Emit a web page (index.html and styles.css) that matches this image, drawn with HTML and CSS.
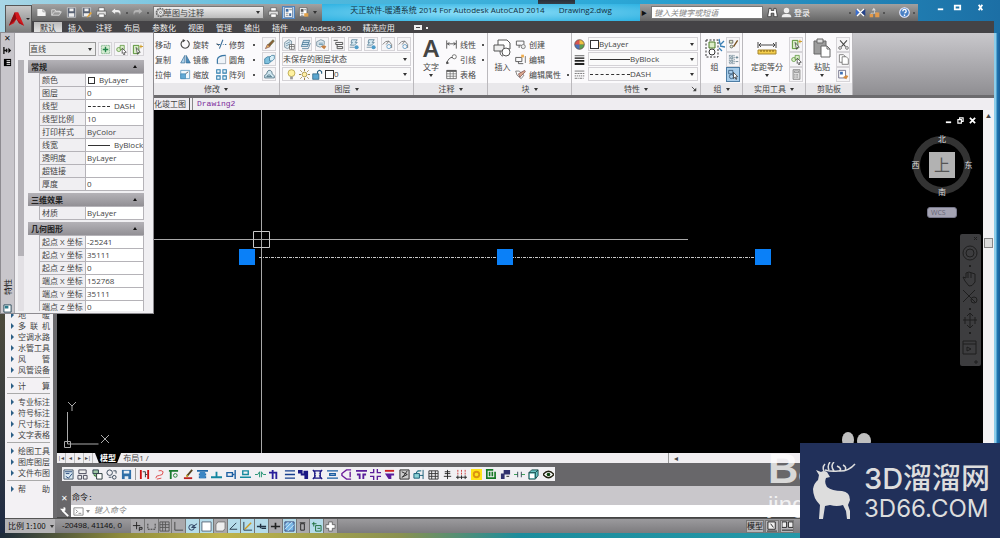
FILE: index.html
```html
<!DOCTYPE html>
<html lang="zh-CN">

<head>
    <meta charset="UTF-8">
    <meta name="viewport" content="width=device-width, initial-scale=1.0">
    <title>天正软件-暖通系统 2014</title>
    <link rel="stylesheet" href="styles.css">
</head>

<body>
    <!-- shared icons -->
    <svg class="sprite" aria-hidden="true">
        <symbol id="i-new" viewBox="0 0 16 16"><path d="M2 3h8l4 4v6H2z" fill="#f4f4f4"/><path d="M10 3v4h4" fill="none" stroke="#888"/></symbol>
        <symbol id="i-open" viewBox="0 0 16 16"><path d="M1 12V4h5l1 2h6v2M1 12l4-5h10l-3 5z" fill="#999" stroke="#eee"/></symbol>
        <symbol id="i-save" viewBox="0 0 16 16"><path d="M2 1h12v14H2z" fill="#596273" stroke="#ddd"/><path d="M5 2h6v4H5zM4 9h8v5H4z" fill="#eee"/></symbol>
        <symbol id="i-saveas" viewBox="0 0 16 16"><path d="M2 1h12v13H2z" fill="#596273" stroke="#ddd"/><path d="M5 2h6v4H5zM4 9h8v4H4z" fill="#eee"/><path d="M8 15l6-8 2 2-6 6z" fill="#e0a33c"/></symbol>
        <symbol id="i-print" viewBox="0 0 16 16"><path d="M4 1h8v5H4z" fill="#fff" stroke="#555"/><path d="M1 6h14v6H1z" fill="#e2e2e2" stroke="#555"/><path d="M4 10h8v5H4z" fill="#fff" stroke="#555"/></symbol>
        <symbol id="i-undo" viewBox="0 0 16 16"><path d="M6 2L1 6l5 4V7.500h4q3 0 3 5 3-8-4-8H6z" fill="#eee"/></symbol>
        <symbol id="i-redo" viewBox="0 0 16 16"><path d="M10 2l5 4-5 4V7.500H6q-3 0-3 5-3-8 4-8h3z" fill="#b5b5b5"/></symbol>
        <symbol id="i-gear" viewBox="0 0 16 16"><circle cx="8" cy="8" r="6" fill="none" stroke="#666" stroke-width="2" stroke-dasharray="2.600 1.100"/><circle cx="8" cy="8" r="4.500" fill="#eee" stroke="#777"/><circle cx="8" cy="8" r="1.500" fill="none" stroke="#666"/></symbol>
        <symbol id="i-sheet" viewBox="0 0 16 16"><path d="M2 1h12v14H2z" fill="#fff" stroke="#3d5a80"/><path d="M4 3h4v4H4zM9 9h3v4H9z" fill="#3d6ea8"/><path d="M9 4h4M4 9h4M4 12h4" stroke="#555"/></symbol>
        <symbol id="i-sheetset" viewBox="0 0 16 16"><path d="M2 1h11v13H2z" fill="#fff" stroke="#555"/><path d="M4 3h4v4H4z" fill="#555"/><path d="M9 4h3M4 9h4M4 12h4" stroke="#555"/><path d="M9 9h6v5H9z" fill="#e2a24a"/></symbol>
        <symbol id="i-find" viewBox="0 0 16 16"><path d="M3 2h3v3h4V2h3l2 12h-5V9H6v5H1z" fill="#fff" stroke="#222"/></symbol>
        <symbol id="i-user" viewBox="0 0 16 16"><circle cx="8" cy="5" r="4" fill="#eee"/><path d="M1 15q0-5 5-5h4q5 0 5 5z" fill="#eee"/></symbol>
        <symbol id="i-x360" viewBox="0 0 16 16"><path d="M1 3l6 5-6 5z" fill="#3b6fd0"/><path d="M3 3l10 10M13 3L3 13" stroke="#fff" stroke-width="2"/><path d="M15 3L9 8l6 5z" fill="#26448c"/></symbol>
        <symbol id="i-net" viewBox="0 0 16 16"><path d="M7 1l3 4H4z" fill="#ddd"/><path d="M3 14V9h10M8 5v4" stroke="#ddd" fill="none"/><path d="M1 10h5v5H1zM9 8h6v7H9z" fill="#e39a4b"/></symbol>
        <symbol id="i-help" viewBox="0 0 16 16"><circle cx="8" cy="8" r="7" fill="#4a80c4" stroke="#eef" stroke-width="1.500"/><path d="M5.500 6q0-2.500 2.500-2.500T10.500 6q0 1.500-2.500 3M8 11v2" stroke="#fff" stroke-width="2" fill="none"/></symbol>

        <symbol id="i-rotate" viewBox="0 0 16 16"><path d="M10 2a6 6 0 1 1-5 0" fill="none" stroke="#444" stroke-width="1.600"/><path d="M4 0l4 2-4 3z" fill="#444"/></symbol>
        <symbol id="i-mirror" viewBox="0 0 16 16"><path d="M7 2v11H1z" fill="#aed3ec" stroke="#336a94"/><path d="M9 2v11h6z" fill="#4c8dbd" stroke="#336a94"/></symbol>
        <symbol id="i-scale" viewBox="0 0 16 16"><path d="M1 2h13v12H1z" fill="#eef7fc" stroke="#3f88b5"/><path d="M1 7h7v7H1z" fill="#62a9d4" stroke="#3f88b5"/><path d="M8 7l4-3" stroke="#333"/></symbol>
        <symbol id="i-trim" viewBox="0 0 16 16"><path d="M1 8h5M10 8h1M13 8h2M5 14L10 1" stroke="#3c6f99" stroke-width="1.600"/><path d="M1 6l3 4" stroke="#444"/></symbol>
        <symbol id="i-fillet" viewBox="0 0 16 16"><path d="M2 14V8q1-6 12-6v12z" fill="#eef3f8" stroke="#8a97a6"/><path d="M2 14V8q1-6 12-6" fill="none" stroke="#3877a7" stroke-width="1.600"/></symbol>
        <symbol id="i-array" viewBox="0 0 16 16"><path d="M1 1h5v5H1zM10 1h5v5h-5zM1 10h5v5H1zM10 10h5v5h-5z" fill="#eaf5fc" stroke="#2f7dad" stroke-width="1.500"/></symbol>
        <symbol id="i-erase" viewBox="0 0 16 16"><path d="M5 9l8-8 2 2-7 8z" fill="#8d5a33" stroke="#563"/><path d="M2 14l3-6 4 3z" fill="#e5b35c" stroke="#855"/></symbol>
        <symbol id="i-box" viewBox="0 0 16 16"><path d="M1 7l4-3h5v7l-3 3H1z" fill="#7fc0dd" stroke="#276d91"/><path d="M8 5l3-3h4v5l-3 3H8z" fill="#d8eff8" stroke="#276d91"/></symbol>
        <symbol id="i-offset" viewBox="0 0 16 16"><path d="M1 13V9q2-1 3-2 1-6 5-5 3 1 3 5l3 3v3z" fill="#cfe6ef" stroke="#31596e"/><path d="M4 11q3-5 7 0z" fill="none" stroke="#31596e"/></symbol>
        <symbol id="i-layers" viewBox="0 0 16 16"><path d="M1 5l6-4 4 2v7l-6 4-4-2z" fill="#dfeaf0" stroke="#59798b"/><path d="M3 7l6-3M3 10l6-3" fill="none" stroke="#4d7f9c"/><path d="M8 8h7v7H8zM8 11h7M11 8v7" fill="#fff" stroke="#555"/></symbol>
        <symbol id="i-layerstack" viewBox="0 0 16 16"><path d="M5 2h9l-3 9H2z" fill="#cfe2ee" stroke="#2f6688"/><path d="M4 5h9M3 8h9M3 14h9l3-8" fill="none" stroke="#2f6688"/></symbol>
        <symbol id="i-layerpen" viewBox="0 0 16 16"><path d="M1 4l6-3 5 2v5l-6 4-5-2z" fill="#dfeaf0" stroke="#59798b"/><path d="M4 6h6M4 8h6" stroke="#4d7f9c"/><path d="M7 11l5 4 3-4-3-2z" fill="#c58146"/></symbol>
        <symbol id="i-layerlist" viewBox="0 0 16 16"><path d="M1 2h6M4 5h10v3H4zM6 8v6h8v-3H6" fill="none" stroke="#4b4b4b" stroke-width="1.300"/></symbol>
        <symbol id="i-layeroff" viewBox="0 0 16 16"><path d="M4 1h8L9 5h3L8 9H2l3-4H3z" fill="#d3e7f1" stroke="#47718a"/><path d="M1 12h7" stroke="#47718a"/><circle cx="11" cy="12" r="3" fill="#4d9bc8"/></symbol>
        <symbol id="i-layerhook" viewBox="0 0 16 16"><path d="M1 8q4-6 9-5l4 5v5M10 3L6 8" fill="none" stroke="#777" stroke-width="1.300"/><circle cx="10" cy="11" r="3" fill="none" stroke="#3e87b8"/></symbol>
        <symbol id="i-bulb" viewBox="0 0 16 16"><circle cx="8" cy="6" r="5" fill="#fff2a0" stroke="#a8922e"/><path d="M6 11h4v4H6z" fill="#999"/></symbol>
        <symbol id="i-sun" viewBox="0 0 16 16"><circle cx="8" cy="8" r="3.500" fill="#fff0a3" stroke="#8f772c"/><path d="M8 0v3M8 13v3M0 8h3M13 8h3M2 2l2 2M12 12l2 2M14 2l-2 2M4 12l-2 2" stroke="#8f772c" stroke-width="1.300"/></symbol>
        <symbol id="i-lock" viewBox="0 0 16 16"><path d="M1 7h9v8H1z" fill="#5aa6cf" stroke="#225b7c"/><path d="M8 7V4q3-4 6 0v3" fill="none" stroke="#225b7c" stroke-width="1.600"/></symbol>
        <symbol id="i-dim" viewBox="0 0 16 16"><path d="M1 2v12M15 2v12M2 7h12M5 5L2 7l3 2M11 5l3 2-3 2" fill="none" stroke="#444" stroke-width="1.200"/></symbol>
        <symbol id="i-leader" viewBox="0 0 16 16"><path d="M1 14Q4 4 10 5" fill="none" stroke="#444" stroke-width="1.300"/><path d="M0 11l1 4 4-2z" fill="#444"/><circle cx="12" cy="4" r="3" fill="#fff" stroke="#444"/></symbol>
        <symbol id="i-table" viewBox="0 0 16 16"><path d="M1 2h14v12H1z" fill="#fff" stroke="#444"/><path d="M1 3h14" stroke="#444" stroke-width="2"/><path d="M1 7h14M1 10.500h14M6 4v10M10.500 4v10" stroke="#666"/></symbol>
        <symbol id="i-insert" viewBox="0 0 20 20"><path d="M5 7V2h9l3 3v6h-4" fill="#fff" stroke="#555"/><path d="M1 7h10v6H1z" fill="#eee" stroke="#555"/><circle cx="13" cy="14" r="4" fill="#fff" stroke="#555"/><path d="M7 13q0 5 3 5" fill="none" stroke="#555"/></symbol>
        <symbol id="i-create" viewBox="0 0 16 16"><path d="M2 3h11v5M2 3v6h7M6 9v4" fill="none" stroke="#555" stroke-width="1.300"/><circle cx="12" cy="11" r="3" fill="#eee" stroke="#555"/></symbol>
        <symbol id="i-edit" viewBox="0 0 16 16"><path d="M1 5h9v6H1zM5 11v3h7" fill="none" stroke="#555" stroke-width="1.300"/><path d="M9 1h4v4H9z" fill="#f0ad4e"/><path d="M15 3v10" stroke="#444"/></symbol>
        <symbol id="i-attr" viewBox="0 0 16 16"><path d="M1 3h5l7 6-4 5-6-5z" fill="#fff" stroke="#555"/><path d="M5 7l9-5 1 2-8 8z" fill="#d9a78d" stroke="#744"/></symbol>
        <symbol id="i-wheel" viewBox="0 0 16 16"><circle cx="8" cy="8" r="7" fill="#d9534f"/><path d="M8 8V1a7 7 0 0 1 7 7z" fill="#f0c040"/><path d="M8 8h7a7 7 0 0 1-7 7z" fill="#59a14f"/><path d="M8 15a7 7 0 0 1-7-7h7z" fill="#4a72b8"/><circle cx="8" cy="8" r="7" fill="none" stroke="#555"/></symbol>
        <symbol id="i-weight" viewBox="0 0 16 16"><path d="M1 2.500h14" stroke="#222"/><path d="M1 6h14" stroke="#222" stroke-width="2"/><path d="M1 10h14" stroke="#222" stroke-width="2.500"/><path d="M1 14.500h14" stroke="#222" stroke-width="3"/></symbol>
        <symbol id="i-ltype" viewBox="0 0 16 16"><path d="M1 3h14" stroke="#444"/><path d="M1 6.500h14" stroke="#444" stroke-dasharray="3 1"/><path d="M1 10h14" stroke="#444" stroke-dasharray="2 1"/><path d="M1 13.500h14" stroke="#444" stroke-dasharray="4 1 1 1"/></symbol>
        <symbol id="i-group" viewBox="0 0 20 20"><path d="M1 2h12v17H1z" fill="none" stroke="#333" stroke-dasharray="2 1.500"/><path d="M4 4h6v6H4z" fill="#dcedc8" stroke="#4a7a25"/><circle cx="7" cy="14" r="3" fill="#fff" stroke="#333"/><path d="M14 1l1 5M19 3l-4 4M20 9l-5-1M17 13l-3-3" stroke="#3a7fb5" stroke-width="1.300"/></symbol>
        <symbol id="i-ungroup" viewBox="0 0 16 16"><path d="M2 2h5v4H2zM3 11a2 2 0 1 0 4 0 2 2 0 1 0-4 0" fill="#dfe9c9" stroke="#444"/><path d="M8 11l6-9" stroke="#76501f" stroke-width="2"/></symbol>
        <symbol id="i-plusminus" viewBox="0 0 16 16"><path d="M2 2h7v12H2z" fill="none" stroke="#467" stroke-dasharray="2 1"/><path d="M4 4h3v3H4zM4 9h3v3H4zM11 5h4M13 3v4M11 11h4" fill="none" stroke="#467"/></symbol>
        <symbol id="i-pick" viewBox="0 0 16 16"><path d="M1 2h6v5H1z" fill="none" stroke="#246"/><circle cx="5" cy="11" r="3" fill="none" stroke="#246"/><path d="M8 5l6 6-3 .5 2 3-1.500.5-1.500-3-2 2z" fill="#fff" stroke="#222"/></symbol>
        <symbol id="i-measure" viewBox="0 0 20 20"><path d="M1 4v6M19 4v6M2 7h16M4 5L2 7l2 2M16 5l2 2-2 2" fill="none" stroke="#444"/><path d="M1 12h18v4H1z" fill="#f3cd4c" stroke="#a6852a"/><path d="M4 12v2M7 12v2M10 12v2M13 12v2M16 12v2" stroke="#846312"/></symbol>
        <symbol id="i-qselect" viewBox="0 0 16 16"><path d="M2 2h8v12H2z" fill="#d8edc8" stroke="#4d8a2a" stroke-width="1.300"/><path d="M6 5l6 7-3 0-1 3z" fill="#fff" stroke="#333"/><path d="M13 1v5M11 3.500h5" stroke="#d0a030" stroke-width="1.500"/></symbol>
        <symbol id="i-select" viewBox="0 0 16 16"><circle cx="4" cy="8" r="3" fill="#d8edc8" stroke="#4d8a2a"/><path d="M6 2h6v6H6z" fill="#d8edc8" stroke="#4d8a2a"/><path d="M9 6l6 6-3 .5 1 2.500-2 .5-1-3-1 1z" fill="#fff" stroke="#333"/></symbol>
        <symbol id="i-pickadd" viewBox="0 0 16 16"><path d="M2 2h12v12H2z" fill="#d5ecd2" stroke="#60a070" stroke-dasharray="2 1"/><path d="M8 4v8M4 8h8" stroke="#23844a" stroke-width="2"/></symbol>
        <symbol id="i-calc" viewBox="0 0 16 16"><path d="M3 1h10v14H3z" fill="#ddd" stroke="#666"/><path d="M5 3h6v2H5z" fill="#fff" stroke="#777"/><path d="M5 8h6M5 10h6M5 12h6" stroke="#666" stroke-dasharray="1 1"/></symbol>
        <symbol id="i-paste" viewBox="0 0 20 20"><path d="M2 3h12v13H2z" fill="#9c9c9c" stroke="#666"/><path d="M5 1h6v4H5z" fill="#ddd" stroke="#666"/><path d="M9 8h6l3 3v8H9z" fill="#fff" stroke="#666"/><path d="M15 8v3h3" fill="none" stroke="#666"/></symbol>
        <symbol id="i-cut" viewBox="0 0 16 16"><path d="M3 2l8 9M13 2l-8 9" stroke="#444" stroke-width="1.500"/><circle cx="3" cy="13" r="2" fill="none" stroke="#444"/><circle cx="13" cy="13" r="2" fill="none" stroke="#444"/></symbol>
        <symbol id="i-copy" viewBox="0 0 16 16"><path d="M2 1h6l2 2v9H2z" fill="#fff" stroke="#555"/><path d="M6 4h6l3 3v8H6z" fill="#fff" stroke="#555"/></symbol>
        <symbol id="i-match" viewBox="0 0 16 16"><path d="M1 2h10v11H1z" fill="#fff" stroke="#446"/><path d="M3 4h4v4H3z" fill="#3c6eb4"/><path d="M7 12l5 3 3-5-3-1z" fill="#d38a3e"/></symbol>
    </svg>

    <header class="top">
        <button class="app-button" aria-label="应用程序菜单">
            <svg viewBox="0 0 20 20"><path d="M1 18L8 2h4l7 16-6-3-3-5-3 5z" fill="#d3191f"/><path d="M8 2l2 8-9 8z" fill="#8e0d12"/><path d="M10 10l9 8-6-3z" fill="#a31016"/></svg>
        </button>
        <div class="titlebar">
            <div class="quick">
                <button aria-label="新建"><svg><use href="#i-new"/></svg></button>
                <button aria-label="打开"><svg><use href="#i-open"/></svg></button>
                <button aria-label="保存"><svg><use href="#i-save"/></svg></button>
                <button aria-label="另存为"><svg><use href="#i-saveas"/></svg></button>
                <button aria-label="打印"><svg><use href="#i-print"/></svg></button>
                <button aria-label="放弃"><svg><use href="#i-undo"/></svg></button>
                <i class="dot"></i>
                <button aria-label="重做"><svg><use href="#i-redo"/></svg></button>
                <i class="dot"></i>
                <label class="drop workspace">
                    <svg><use href="#i-gear"/></svg>
                    <select aria-label="工作空间"><option>草图与注释</option></select>
                </label>
                <button aria-label="打印"><svg><use href="#i-print"/></svg></button>
                <button class="on" aria-label="图纸"><svg><use href="#i-sheet"/></svg></button>
                <button aria-label="图纸集"><svg><use href="#i-sheetset"/></svg></button>
                <i class="arrow"></i>
            </div>
            <h1>天正软件-暖通系统 2014 For Autodesk AutoCAD 2014 <span>Drawing2.dwg</span></h1>
            <div class="infocenter">
                <button class="expand" aria-label="展开">▶</button>
                <input type="text" placeholder="键入关键字或短语" aria-label="搜索">
                <button aria-label="查找"><svg><use href="#i-find"/></svg></button>
                <button class="login"><svg><use href="#i-user"/></svg>登录</button>
                <i class="dot"></i>
                <button aria-label="Exchange"><svg><use href="#i-x360"/></svg></button>
                <button aria-label="连接"><svg><use href="#i-net"/></svg></button>
                <i class="dot"></i>
                <button class="help" aria-label="帮助"><svg><use href="#i-help"/></svg></button>
                <i class="dot"></i>
            </div>
            <div class="window-buttons">
                <button aria-label="最小化"><svg viewBox="0 0 10 10"><path d="M2 7h6" stroke="#fff" stroke-width="2"/></svg></button>
                <button aria-label="最大化"><svg viewBox="0 0 10 10"><path d="M2 3h6v4H2z" fill="none" stroke="#fff" stroke-width="2"/></svg></button>
                <button class="close" aria-label="关闭"><svg viewBox="0 0 10 10"><path d="M3 2l4 6M7 2L3 8" stroke="#fff" stroke-width="2"/></svg></button>
            </div>
        </div>
        <nav class="ribbon-tabs">
            <button class="active">默认</button>
            <button>插入</button>
            <button>注释</button>
            <button>布局</button>
            <button>参数化</button>
            <button>视图</button>
            <button>管理</button>
            <button>输出</button>
            <button>插件</button>
            <button>Autodesk 360</button>
            <button>精选应用</button>
            <button class="minimize" aria-label="最小化功能区"><span></span><i class="dot"></i></button>
        </nav>
    </header>

    <section class="ribbon">
        <div class="panel draw"></div>
        <div class="panel modify">
            <div class="panel-body">
                <button>移动</button>
                <button><svg><use href="#i-rotate"/></svg>旋转</button>
                <button><svg><use href="#i-trim"/></svg>修剪<i class="dot"></i></button>
                <button class="tool"><svg><use href="#i-erase"/></svg></button>
                <button>复制</button>
                <button><svg><use href="#i-mirror"/></svg>镜像</button>
                <button><svg><use href="#i-fillet"/></svg>圆角<i class="dot"></i></button>
                <button class="tool"><svg><use href="#i-box"/></svg></button>
                <button>拉伸</button>
                <button><svg><use href="#i-scale"/></svg>缩放</button>
                <button><svg><use href="#i-array"/></svg>阵列<i class="dot"></i></button>
                <button class="tool"><svg><use href="#i-offset"/></svg></button>
            </div>
            <div class="panel-name">修改<i class="arrow"></i></div>
        </div>
        <div class="panel layers">
            <div class="panel-body">
                <div class="tool-row">
                    <button class="tool"><svg><use href="#i-layers"/></svg></button>
                    <button class="tool"><svg><use href="#i-layerstack"/></svg></button>
                    <button class="tool"><svg><use href="#i-layerpen"/></svg></button>
                    <button class="tool"><svg><use href="#i-layerlist"/></svg></button>
                    <button class="tool"><svg><use href="#i-layeroff"/></svg></button>
                    <button class="tool"><svg><use href="#i-layeroff"/></svg></button>
                    <button class="tool"><svg><use href="#i-layerhook"/></svg></button>
                    <button class="tool"><svg><use href="#i-layerhook"/></svg></button>
                </div>
                <label class="drop"><select aria-label="图层状态"><option>未保存的图层状态</option></select></label>
                <label class="drop">
                    <svg><use href="#i-bulb"/></svg>
                    <svg><use href="#i-sun"/></svg>
                    <svg><use href="#i-lock"/></svg>
                    <i class="swatch"></i>
                    <select aria-label="图层"><option>0</option></select>
                </label>
            </div>
            <div class="panel-name">图层<i class="arrow"></i></div>
        </div>
        <div class="panel annotate">
            <div class="panel-body">
                <button class="big"><b class="letter">A</b>文字<i class="arrow"></i></button>
                <div class="stack">
                    <button><svg><use href="#i-dim"/></svg>线性<i class="dot"></i></button>
                    <button><svg><use href="#i-leader"/></svg>引线<i class="dot"></i></button>
                    <button><svg><use href="#i-table"/></svg>表格</button>
                </div>
            </div>
            <div class="panel-name">注释<i class="arrow"></i></div>
        </div>
        <div class="panel block">
            <div class="panel-body">
                <button class="big"><svg><use href="#i-insert"/></svg>插入</button>
                <div class="stack">
                    <button><svg><use href="#i-create"/></svg>创建</button>
                    <button><svg><use href="#i-edit"/></svg>编辑</button>
                    <button><svg><use href="#i-attr"/></svg>编辑属性<i class="dot"></i></button>
                </div>
            </div>
            <div class="panel-name">块<i class="arrow"></i></div>
        </div>
        <div class="panel props">
            <div class="panel-body">
                <svg><use href="#i-wheel"/></svg>
                <label class="drop"><i class="swatch"></i><select aria-label="颜色"><option>ByLayer</option></select></label>
                <svg><use href="#i-weight"/></svg>
                <label class="drop"><i class="line"></i><select aria-label="线宽"><option>ByBlock</option></select></label>
                <svg><use href="#i-ltype"/></svg>
                <label class="drop"><i class="line dashed"></i><select aria-label="线型"><option>DASH</option></select></label>
            </div>
            <div class="panel-name">特性<i class="arrow"></i>
                <svg class="launcher" viewBox="0 0 8 8"><path d="M1 1l4 4" stroke="#444"/><path d="M6 2v4H2z" fill="#444"/></svg>
            </div>
        </div>
        <div class="panel group">
            <div class="panel-body">
                <button class="big"><svg><use href="#i-group"/></svg>组</button>
                <div class="stack">
                    <button class="tool"><svg><use href="#i-ungroup"/></svg></button>
                    <button class="tool"><svg><use href="#i-plusminus"/></svg></button>
                    <button class="tool on"><svg><use href="#i-pick"/></svg></button>
                </div>
            </div>
            <div class="panel-name">组<i class="arrow"></i></div>
        </div>
        <div class="panel utils">
            <div class="panel-body">
                <button class="big"><svg><use href="#i-measure"/></svg>定距等分<i class="arrow"></i></button>
                <div class="stack">
                    <button class="tool"><svg><use href="#i-qselect"/></svg></button>
                    <button class="tool"><svg><use href="#i-select"/></svg></button>
                    <button class="tool"><svg><use href="#i-calc"/></svg></button>
                </div>
            </div>
            <div class="panel-name">实用工具<i class="arrow"></i></div>
        </div>
        <div class="panel clipboard">
            <div class="panel-body">
                <button class="big"><svg><use href="#i-paste"/></svg>粘贴<i class="arrow"></i></button>
                <div class="stack">
                    <button class="tool"><svg><use href="#i-cut"/></svg></button>
                    <button class="tool"><svg><use href="#i-copy"/></svg></button>
                    <button class="tool"><svg><use href="#i-match"/></svg></button>
                </div>
            </div>
            <div class="panel-name">剪贴板</div>
        </div>
    </section>

    <nav class="doc-tabs">
        <button>化竣工图</button>
        <button class="current">Drawing2</button>
    </nav>

    <main class="workspace-area">
        <ul class="side-menu">
            <li><button>地暖</button></li>
            <li><button>多联机</button></li>
            <li><button>空调水路</button></li>
            <li><button>水管工具</button></li>
            <li><button>风管</button></li>
            <li><button>风管设备</button></li>
            <li class="split"><button>计算</button></li>
            <li class="split"><button>专业标注</button></li>
            <li><button>符号标注</button></li>
            <li><button>尺寸标注</button></li>
            <li><button>文字表格</button></li>
            <li class="split"><button>绘图工具</button></li>
            <li><button>图库图层</button></li>
            <li><button>文件布图</button></li>
            <li class="split"><button>帮助</button></li>
        </ul>

        <div class="editor">
            <div class="view">
                <div class="canvas">
                    <svg class="drawing">
                        <path d="M204.500 0v343M0 129.500h631" stroke="#a8a8a8"/>
                        <path d="M196.500 121.500h16v16h-16z" fill="none" stroke="#c8c8c8"/>
                        <path d="M202 147.500h496" stroke="#c8c8c8" stroke-dasharray="3 1 1 1"/>
                        <path d="M182 139h16v16h-16zM440 139h16v16h-16zM698 139h16v16h-16z" fill="#0a80f8"/>
                        <!-- UCS icon -->
                        <path d="M10.500 302v32h31M7.500 331.500h6v6h-6z" fill="none" stroke="#aaa"/>
                        <path d="M11 292l4 4 4-4M15 296v5M44 325l8 8M52 325l-8 8" fill="none" stroke="#aaa"/>
                    </svg>
                    <div class="mdi-buttons">
                        <button aria-label="最小化"><svg viewBox="0 0 8 8"><path d="M1 6h6" stroke="#fff" stroke-width="2"/></svg></button>
                        <button aria-label="还原"><svg viewBox="0 0 8 8"><path d="M1 3h4v4H1zM3 2.500V1h4v4H5.500" fill="none" stroke="#fff" stroke-width="1.300"/></svg></button>
                        <button aria-label="关闭"><svg viewBox="0 0 8 8"><path d="M1 1l6 6M7 1L1 7" stroke="#fff" stroke-width="2"/></svg></button>
                    </div>
                    <div class="viewcube">
                        <span>北</span>
                        <span>西</span>
                        <button>上</button>
                        <span>东</span>
                        <span>南</span>
                    </div>
                    <button class="wcs">WCS</button>
                    <div class="navbar">
                        <svg viewBox="0 0 20 132" fill="none" stroke="#1e1e1e">
                            <circle cx="10" cy="19" r="7"/><circle cx="10" cy="19" r="4"/>
                            <path d="M10 31v2M10 74v2M10 98v2" stroke-width="2"/>
                            <path d="M5 47l-2-4 3 1V39l3-1 3 1 3 1v8q-3 5-6 4zM8 39v5M11 39v5"/>
                            <path d="M3 56l12 12M15 56L3 68"/><circle cx="14" cy="66" r="3"/>
                            <path d="M10 80v13M3 86h14M7 82l3-3 3 3M7 91l3 3 3-3M5 83v7M15 83v7"/>
                            <path d="M3 107h13v13H3zM3 110h13M7 113l4 2-4 2z"/>
                            <path d="M14 3l3 3M17 3l-3 3M15 127h2v2h-2z"/>
                        </svg>
                    </div>
                </div>
                <div class="vscroll"><span>▲</span><i></i></div>
            </div>

            <div class="layout-tabs">
                <button>|◂</button><button>◂</button><button>▸</button><button>▸|</button>
                <button class="model">模型</button>
                <button class="sheet">布局1 /</button>
                <div class="hscroll">◂</div>
            </div>

            <div class="toolbar">
                <div class="strip">
                    <svg viewBox="0 0 12 12"><path d="M1 1h10v10H1z" fill="#dceaf2" stroke="#456"/><path d="M2 3h8M3 5h4M3 8l3 2 4-5" fill="none" stroke="#247"/></svg>
                    <svg viewBox="0 0 12 12"><path d="M2 1h8v4H2zM1 7h4v4H1zM7 7h4v4H7z" fill="#eee" stroke="#445"/></svg>
                    <svg viewBox="0 0 12 12"><path d="M1 1h6v4H1z" fill="#9dc8a4" stroke="#234"/><path d="M5 5h6v6H5z" fill="#fff" stroke="#233"/><path d="M1 6l3 3V6z" fill="#272"/></svg>
                    <svg viewBox="0 0 12 12"><circle cx="4" cy="4" r="3" fill="none" stroke="#345"/><circle cx="9" cy="9" r="2" fill="none" stroke="#345"/><path d="M8 2h3v3M3 9h3" fill="none" stroke="#345"/></svg>
                    <svg viewBox="0 0 12 12"><path d="M1 1h10v10H1z" fill="#2e6fa8"/><path d="M3 2h6v3H3zM4 8h4v3H4z" fill="#e6eef5"/></svg>
                    <i class="rule"></i>
                    <svg viewBox="0 0 12 12"><path d="M2 1v10M10 1v10" stroke="#c11" stroke-width="2"/><path d="M4 3h3v6M7 6h2" fill="none" stroke="#333"/></svg>
                    <svg viewBox="0 0 12 12"><path d="M2 10q0-3 4-3t4-4q-2-2-5-1M3 11l5-1" fill="none" stroke="#d44"/></svg>
                    <svg viewBox="0 0 12 12"><path d="M1 2h10M3 2v9" stroke="#1a7c2f" stroke-width="2"/><circle cx="8" cy="7" r="2" fill="none" stroke="#1a7c2f"/></svg>
                    <svg viewBox="0 0 12 12"><path d="M10 1L4 8" stroke="#542" stroke-width="2"/><path d="M1 10h9" stroke="#b22" stroke-width="2"/><path d="M4 6l2 2-3 1z" fill="#db3"/></svg>
                    <svg viewBox="0 0 12 12"><path d="M0 2h12M2 6h8M2 9h8" stroke="#2068a8" stroke-width="2"/><path d="M3 3h6v7H3z" fill="#3c86c4"/></svg>
                    <svg viewBox="0 0 12 12"><path d="M0 9h12M6 3v6" stroke="#1486a0" stroke-width="2"/></svg>
                    <svg viewBox="0 0 12 12"><path d="M1 4h6v4H1zM10 1v10M7 6h2" fill="none" stroke="#1d5fa2" stroke-width="1.500"/></svg>
                    <svg viewBox="0 0 12 12"><path d="M3 2h6v4H3zM0 9h12" fill="none" stroke="#168a9e" stroke-width="1.500"/></svg>
                    <svg viewBox="0 0 12 12"><path d="M0 6h3l2-3v6M12 6H9L7 3v6" fill="none" stroke="#1c8f6e"/></svg>
                    <svg viewBox="0 0 12 12"><path d="M4 1v10M8 4v7M0 4h9" fill="none" stroke="#2a1f9c" stroke-width="2"/></svg>
                    <svg viewBox="0 0 12 12"><path d="M1 2h11M1 6h11M1 10h11" stroke="#173f8e" stroke-width="1.500"/></svg>
                    <svg viewBox="0 0 12 12"><path d="M0 1h5v4H0zM6 2h5v9H7V7H3V5h3z" fill="#1b1784"/></svg>
                    <svg viewBox="0 0 12 12"><path d="M3 2h6v8H3zM1 1l3 4M11 1L8 5M1 11l3-4M11 11L8 7" fill="none" stroke="#1b1784" stroke-width="1.500"/></svg>
                    <svg viewBox="0 0 12 12"><path d="M0 2h12M0 10h12M3 5h6v2H3z" stroke="#1d5fa2" stroke-width="1.500" fill="none"/></svg>
                    <svg viewBox="0 0 12 12"><path d="M11 1H6L1 5v2l5 4h5M10 3v6" fill="none" stroke="#6a1b9a" stroke-width="1.500"/></svg>
                    <svg viewBox="0 0 12 12"><path d="M0 2h12M1 6h3v5M11 6H8v5" fill="none" stroke="#5b1e9c" stroke-width="2"/></svg>
                    <svg viewBox="0 0 12 12"><path d="M4 0v4H0M8 0v4h4M4 12V8H0M8 12V8h4" fill="none" stroke="#5b1e9c" stroke-width="1.500"/></svg>
                    <svg viewBox="0 0 12 12"><path d="M1 2h10" stroke="#c22" stroke-width="2"/><path d="M1 5h10v2H8v4H5z" fill="#5b1e9c"/></svg>
                    <svg viewBox="0 0 12 12"><path d="M1 1h10v10H1z" fill="#ccc" stroke="#222"/><path d="M3 3l6 3-6 3M9 2L4 9" fill="none" stroke="#222"/></svg>
                    <svg viewBox="0 0 12 12"><path d="M1 5h6v5H1zM11 1v10M7 7h4M3 5l2-3h4" fill="#8cd3d6" stroke="#145a73"/></svg>
                    <svg viewBox="0 0 12 12"><path d="M1 2h10v9H1zM1 5h10M1 8h10M4 2v9M8 2v9" fill="none" stroke="#333"/></svg>
                    <svg viewBox="0 0 12 12"><path d="M3 3h6M6 1v10M3 5h6M2 8h8" stroke="#222"/></svg>
                    <svg viewBox="0 0 12 12"><path d="M2 1v6M6 1v6M10 1v6" stroke="#c33" stroke-dasharray="2 1"/><path d="M0 9h12M2 7v4M6 7v4M10 7v4" stroke="#222"/></svg>
                    <svg viewBox="0 0 12 12"><path d="M0 0h12v12H0z" fill="#ffe41a"/><circle cx="6" cy="6" r="3" fill="none" stroke="#dc9510" stroke-width="2"/></svg>
                    <svg viewBox="0 0 12 12"><path d="M1 1h8M2 1v9h10M5 3v5M8 3v5M11 3v7" fill="none" stroke="#157a25" stroke-width="1.800"/></svg>
                    <svg viewBox="0 0 12 12"><path d="M4 1h7v5H4zM1 5h4v6H1z" fill="#31316e"/><path d="M7 8h3" stroke="#222"/></svg>
                    <svg viewBox="0 0 12 12"><path d="M0 6h4M8 6h4" stroke="#2d9b4b"/><path d="M4 3v6M8 3v6" stroke="#345"/></svg>
                    <svg viewBox="0 0 12 12"><path d="M1 4l3-3h7v6l-3 4H1z" fill="#67c4c4" stroke="#144"/><path d="M2 5h5v5H2z" fill="#fff"/><path d="M1 4h7v6M8 4l3-3" fill="none" stroke="#144"/></svg>
                    <svg viewBox="0 0 12 12"><path d="M0 6q6-7 12 0-6 7-12 0z" fill="#fff" stroke="#221" stroke-width="1.500"/><circle cx="6" cy="6" r="2" fill="#141"/></svg>
                </div>
            </div>

            <div class="command">
                <div class="command-grip">
                    <button aria-label="关闭">✕</button>
                    <button aria-label="自定义"><svg viewBox="0 0 12 12"><path d="M10 11L4 5" stroke="#fff" stroke-width="2"/><path d="M1 3l3 3 3-1V2L5 1v2H3z" fill="#fff"/></svg></button>
                </div>
                <div class="command-body">
                    <p>命令:</p>
                    <label>
                        <svg viewBox="0 0 12 12"><path d="M1 2h10v8H1zM3 4l2 2-2 2M6 8h3" fill="none" stroke="#888"/></svg>
                        <i class="arrow"></i>
                        <input type="text" placeholder="键入命令" aria-label="命令">
                    </label>
                </div>
            </div>
        </div>
    </main>

    <footer class="status">
        <button class="ratio">比例 1:100<i class="arrow"></i></button>
        <span class="coords">-20498, 41146, 0</span>
        <div class="modes">
            <button><svg viewBox="0 0 12 12"><path d="M5 1v8M1 5h8M8 7v4M8 7h3v2H8" fill="none" stroke="#222"/></svg></button>
            <button><svg viewBox="0 0 12 12"><path d="M2 3v6h8V3" fill="none" stroke="#333" stroke-dasharray="2 1"/></svg></button>
            <button><svg viewBox="0 0 12 12"><path d="M1 1h10v10H1zM4 1v10M7 1v10M1 4h10M1 7h10" fill="none" stroke="#555"/></svg></button>
            <button><svg viewBox="0 0 12 12"><path d="M2 1v9h9" fill="none" stroke="#444"/></svg></button>
            <button class="on"><svg viewBox="0 0 12 12"><circle cx="5" cy="7" r="3" fill="none" stroke="#235"/><path d="M5 7l6-4M5 7h5" stroke="#235"/></svg></button>
            <button class="on"><svg viewBox="0 0 12 12"><path d="M1 1h10v10H1z" fill="#fff" stroke="#567"/></svg></button>
            <button><svg viewBox="0 0 12 12"><path d="M3 1h8v7l-2 3H1V4z" fill="#eee" stroke="#777"/></svg></button>
            <button class="on"><svg viewBox="0 0 12 12"><path d="M9 2L2 9h8" fill="none" stroke="#234"/></svg></button>
            <button class="on"><svg viewBox="0 0 12 12"><path d="M2 1v9h9" fill="none" stroke="#234"/><path d="M3 9l7-7" stroke="#c92" stroke-width="1.500"/></svg></button>
            <button class="on"><svg viewBox="0 0 12 12"><path d="M1 6h10M5 3v5M6 8h5" stroke="#234" stroke-width="1.500"/></svg></button>
            <button><svg viewBox="0 0 12 12"><path d="M1 6h10M6 2v7" stroke="#222" stroke-width="1.800"/></svg></button>
            <button class="on"><svg viewBox="0 0 12 12"><path d="M1 1h10v10H1z" fill="#76b5e4" stroke="#347"/><path d="M1 5l4-4M1 9l8-8M4 11l7-7" stroke="#d5ecfb"/></svg></button>
            <button><svg viewBox="0 0 12 12"><path d="M4 3h4v7H4zM3 2h6" fill="none" stroke="#222"/></svg></button>
            <button class="on"><svg viewBox="0 0 12 12"><path d="M1 3h5M3 1v5M5 5h6v6H5zM7 8h3" fill="none" stroke="#186a35"/></svg></button>
            <button><svg viewBox="0 0 12 12"><path d="M4 1h4v3h3v4H8v3H4V8H1V4h3z" fill="#fff" stroke="#666"/></svg></button>
        </div>
        <div class="spaces">
            <button>模型</button>
            <button><svg viewBox="0 0 12 12"><path d="M1 1h8v8H1zM0 11h11" fill="#eee" stroke="#222"/><path d="M4 3l3 4" stroke="#222"/></svg></button>
            <button><svg viewBox="0 0 12 12"><path d="M0 1h5v6H0zM7 1h5v6H7zM0 10h12" fill="#eee" stroke="#222"/></svg></button>
        </div>
    </footer>

    <aside class="palette">
        <div class="palette-bar">
            <button>✕</button>
            <button><svg viewBox="0 0 10 10"><path d="M1 1v8M1 5h4M4 3v4" stroke="#111" stroke-width="1.500"/><path d="M6 2l3 3-3 3z"/></svg></button>
            <button><svg viewBox="0 0 10 10"><path d="M1 1h8v8H1z"/><path d="M4 3h4M4 5h4M4 7h4" stroke="#fff"/></svg></button>
            <span>特性</span>
            <button><svg viewBox="0 0 10 10"><path d="M1 1h8v8H1z" fill="#fff" stroke="#245"/><path d="M2 2h4v3H2z" fill="#2a7a8c"/></svg></button>
        </div>
        <div class="palette-body">
            <div class="palette-head">
                <label class="drop"><select aria-label="对象"><option>直线</option></select></label>
                <button class="tool"><svg><use href="#i-pickadd"/></svg></button>
                <button class="tool"><svg><use href="#i-select"/></svg></button>
                <button class="tool"><svg><use href="#i-qselect"/></svg></button>
            </div>
            <div class="palette-scroll">
                <div class="track"><i></i></div>
                <div class="sections">
                    <button class="section">常规<i></i></button>
                    <table>
                        <tr><th>颜色</th><td><i class="swatch"></i>ByLayer</td></tr>
                        <tr><th>图层</th><td>0</td></tr>
                        <tr><th>线型</th><td><i class="line dashed"></i>DASH</td></tr>
                        <tr><th>线型比例</th><td>10</td></tr>
                        <tr><th>打印样式</th><td class="locked">ByColor</td></tr>
                        <tr><th>线宽</th><td><i class="line"></i>ByBlock</td></tr>
                        <tr><th>透明度</th><td>ByLayer</td></tr>
                        <tr><th>超链接</th><td></td></tr>
                        <tr><th>厚度</th><td>0</td></tr>
                    </table>
                    <button class="section">三维效果<i></i></button>
                    <table>
                        <tr><th>材质</th><td>ByLayer</td></tr>
                    </table>
                    <button class="section">几何图形<i></i></button>
                    <table>
                        <tr><th>起点 X 坐标</th><td>-25241</td></tr>
                        <tr><th>起点 Y 坐标</th><td>35111</td></tr>
                        <tr><th>起点 Z 坐标</th><td>0</td></tr>
                        <tr><th>端点 X 坐标</th><td>152768</td></tr>
                        <tr><th>端点 Y 坐标</th><td>35111</td></tr>
                        <tr><th>端点 Z 坐标</th><td>0</td></tr>
                    </table>
                </div>
            </div>
        </div>
    </aside>

    <div class="baidu">
        <svg viewBox="0 0 30 16"><ellipse cx="7" cy="10" rx="6" ry="8"/><ellipse cx="23" cy="11" rx="7" ry="8"/></svg>
        <b>Ba</b>
        <span>jing</span>
    </div>
    <div class="brand">
        <svg viewBox="0 0 44 58">
            <path d="M4 8L9 10Q12 8 15 10L18 15 14 16Q12 21 15 25 20 29 30 29 38 30 38 38L36 43 38 49 38 57H35L34 49 31 43Q25 45 18 43L13 44 11 57H7L8 43Q1 36 1 27 2 21 6 18L7 13z" fill="#ddd"/>
            <path d="M12 9Q10 5 13 2M13 8Q20 10 26 9 36 10 43 2M17 8Q15 4 18 0M22 9Q18 4 22 0M27 9Q31 7 25 4M33 8Q35 5 31 3" fill="none" stroke="#ddd" stroke-width="1.500"/>
        </svg>
        <p><b>3D溜溜网</b><span>3D66.COM</span></p>
    </div>
</body>

</html>
```
FILE: styles.css
```css
* {
    margin: 0;
    padding: 0;
    box-sizing: border-box;
}

body {
    position: relative;
    display: flex;
    flex-direction: column;
    height: 100vh;
    padding: 4px 6px 5px 5px;
    overflow: hidden;
    font: 8px/12px "Open Sans", "Noto Sans CJK SC", sans-serif;
    color: #444;
    background:
        linear-gradient(#2a2f38, #34404a) 538px 0 / 37px 4px no-repeat,
        linear-gradient(90deg, #a8d6e6, #55b9dc 30%, #2ca9d8 60%, #1c6fa5) 0 0 / 100% 33px no-repeat,
        linear-gradient(90deg, #8ccdea 2px, #1e78b4 3px, #1a5d96) 100% 0 / 6px 100% no-repeat,
        linear-gradient(90deg, #1c2a3a, #8d8a3c 12%, #c0b44a 22%, #8a9150 40%, #1c8c9c 52%, #2b9fb0) 0 100% / 100% 5px no-repeat,
        linear-gradient(#20242c, #4c4a3c 60%, #1d2a44);
}

button {
    display: flex;
    align-items: center;
    border: 0;
    background: none;
    font: inherit;
    color: inherit;
    white-space: nowrap;
}

svg {
    display: block;
    flex: none;
    width: 11px;
    height: 11px;
}

input,
select {
    min-width: 0;
    border: 0;
    background: none;
    font: inherit;
    color: inherit;
    outline: 0;
}

select {
    flex: 1;
    appearance: none;
}

select:first-child {
    margin-left: -3px;
}

.sprite {
    position: absolute;
    width: 0;
    height: 0;
}

.arrow,
.drop::after {
    content: "";
    flex: none;
    border: 2px solid transparent;
    border-top: 3px solid #333;
    border-bottom: 0;
}

.dot {
    flex: none;
    width: 2px;
    height: 2px;
    background: #555;
}

.drop {
    display: flex;
    align-items: center;
    height: 14px;
    padding: 0 3px;
    border: 1px solid #d4d2d6;
    background: #fafafa;
}

.drop svg {
    margin-right: 2px;
}

.swatch {
    flex: none;
    width: 9px;
    height: 9px;
    border: 1px solid #333;
    background: #fff;
}

.line {
    flex: none;
    width: 40px;
    border-top: 1px solid #333;
}

.dashed {
    border-top-style: dashed;
}

.tool {
    justify-content: center;
    width: 14px;
    height: 14px;
    border: 1px solid #d6d4d8;
    background: #f6f5f7;
}

.tool.on {
    border-color: #4d7da5;
    background: #a9cdea;
}

/* title bar */

.top {
    display: grid;
    grid-template-columns: 27px 1fr;
    grid-template-rows: 17px 12px;
    flex: none;
}

.app-button {
    grid-row: span 2;
    margin-top: 1px;
    padding-left: 2px;
    border: 1px solid #555;
    background: linear-gradient(#c8c8c8, #7c7c7c);
}

.app-button svg {
    width: 17px;
    height: 18px;
}

.app-button::after {
    content: "";
    margin: 2px 0 0 1px;
    border: 2px solid transparent;
    border-top-color: #222;
}

.titlebar {
    display: flex;
    min-width: 0;
}

.quick {
    display: flex;
    align-items: center;
    gap: 4px;
    width: 290px;
    padding: 0 5px 0 4px;
    background: linear-gradient(#a2a2a2, #666);
}

.quick .on {
    outline: 1px solid #4f83bd;
    background: #b9d6f3;
}

.workspace {
    flex: 1;
    height: 13px;
    padding-left: 1px;
    border-color: #777;
    background: linear-gradient(#eee, #bbb);
}

.workspace svg {
    margin-right: -2px;
}

.titlebar h1 {
    flex: 1;
    font-size: 8px;
    font-weight: normal;
    line-height: 12px;
    text-align: center;
    color: #12303e;
    white-space: nowrap;
    background: radial-gradient(#8fe0fa, #55c3ea 60%, #2eb2e2);
}

.titlebar h1 span {
    margin-left: 12px;
}

.infocenter {
    display: flex;
    align-items: center;
    justify-content: space-between;
    width: 278px;
    padding-right: 3px;
    color: #fff;
    background: linear-gradient(#a0a0a0, #666);
}

.infocenter .expand {
    padding: 0 1px;
    font-size: 6px;
    color: #111;
}

.infocenter input {
    width: 112px;
    height: 13px;
    padding-left: 2px;
    border: 1px solid #777;
    background: #fff;
    font-style: italic;
}

.login {
    gap: 2px;
    margin-right: 36px;
}

.help {
    margin-left: 10px;
}

.window-buttons {
    display: flex;
    width: 76px;
    padding-left: 14px;
}

.window-buttons button {
    justify-content: center;
    width: 17px;
    height: 6px;
}

.window-buttons svg {
    width: 9px;
    height: 9px;
}

.window-buttons .close {
    width: 28px;
}

/* ribbon */

.ribbon-tabs {
    display: flex;
    padding: 1px 0 0 2px;
    color: #f0f0f0;
    background: #444346;
}

.ribbon-tabs button {
    padding: 0 6px;
}

.ribbon-tabs .active {
    color: #333;
    background: linear-gradient(#bbb, #e8e8e8);
}

.ribbon-tabs .minimize {
    gap: 4px;
    padding-left: 13px;
}

.minimize span {
    width: 8px;
    height: 5px;
    border: 2px solid #eee;
}

.minimize .dot {
    background: #eee;
}

.ribbon {
    display: flex;
    flex: none;
    border-bottom: 3px solid #6c6b6e;
    background: linear-gradient(#c9c8cc, #8f8e92);
}

.panel {
    flex: none;
    border-right: 1px solid #bbb9bd;
    background: #fbfafc;
}

.panel-body {
    display: flex;
    height: 50px;
    padding: 4px 2px 1px;
}

.panel-name {
    display: flex;
    align-items: center;
    justify-content: center;
    gap: 4px;
    height: 12px;
    background: #e9e8eb;
}

.panel .arrow {
    margin-top: 1px;
}

.stack {
    display: flex;
    flex: 1;
    flex-direction: column;
    align-items: flex-start;
}

.stack button {
    gap: 3px;
    height: 15px;
}

.stack .dot {
    margin-left: 3px;
}

.big {
    flex-direction: column;
    height: 45px;
}

.big svg {
    width: 20px;
    height: 20px;
    margin: 1px 0 3px;
}

.letter {
    height: 24px;
    font: 600 24px/22px "Noto Sans", sans-serif;
}

.draw {
    width: 148px;
}

.modify {
    width: 127px;
}

.modify .panel-body {
    display: grid;
    grid-template-columns: 25px 36px 46px 14px;
    grid-auto-rows: 15px;
}

.modify .panel-body button {
    gap: 2px;
}

.modify .dot {
    margin-left: 6px;
}

.layers {
    width: 134px;
}

.layers .panel-body {
    flex-direction: column;
    gap: 1px;
}

.tool-row {
    display: flex;
    justify-content: space-between;
}

.annotate {
    width: 74px;
}

.annotate .big {
    width: 30px;
}

.block {
    width: 84px;
}

.block .big {
    width: 26px;
}

.props {
    width: 129px;
}

.props .panel-body {
    display: grid;
    grid-template-columns: 11px 1fr;
    grid-auto-rows: 14px;
    gap: 1px 3px;
    align-items: center;
}

.props .drop {
    padding-left: 1px;
}

.props .panel-name {
    position: relative;
}

.launcher {
    position: absolute;
    right: 2px;
    width: 7px;
    height: 7px;
}

.group {
    width: 42px;
}

.group .big {
    width: 23px;
}

.utils {
    width: 63px;
}

.utils .big {
    width: 44px;
}

.clipboard {
    width: 47px;
}

.clipboard .big {
    width: 29px;
}

/* open drawings */

.doc-tabs {
    display: flex;
    flex: none;
    height: 12px;
    padding-left: 148px;
    background: #efedf1;
}

.doc-tabs button {
    padding: 0 3px 0 1px;
    border-right: 1px solid #555;
}

.doc-tabs .current {
    margin-left: 2px;
    padding: 0 4px;
    border: 0;
    border-left: 1px solid #888;
    font-family: "Liberation Mono", monospace;
    color: #7b2a9a;
}

.workspace-area {
    display: flex;
    flex: 1;
    min-height: 0;
}

.side-menu {
    display: flex;
    flex: none;
    flex-direction: column;
    justify-content: flex-end;
    width: 52px;
    padding: 0 3px 24px 2px;
    border-right: 4px solid #6c6b6e;
    background: #f3f1f4;
    list-style: none;
}

.side-menu li {
    display: flex;
    align-items: center;
}

.side-menu li::before {
    content: "";
    margin: 0 4px 0 4px;
    border: 3px solid transparent;
    border-left-color: #2c5f86;
    border-right: 0;
}

.side-menu button {
    display: block;
    flex: 1;
    height: 11px;
    line-height: 11px;
    text-align-last: justify;
}

.side-menu .split {
    margin-top: 2px;
    padding-top: 2px;
    border-top: 1px solid #aaa;
}

.editor {
    display: flex;
    flex: 1;
    flex-direction: column;
    min-width: 0;
}

.view {
    display: flex;
    flex: 1;
    min-height: 0;
}

.canvas {
    position: relative;
    flex: 1;
    background: #000;
}

.drawing {
    width: 100%;
    height: 100%;
}

.mdi-buttons {
    position: absolute;
    top: 7px;
    right: 7px;
    display: flex;
    gap: 5px;
}

.mdi-buttons svg {
    width: 7px;
    height: 7px;
}

.viewcube {
    position: absolute;
    top: 26px;
    right: 12px;
    display: grid;
    grid-template-columns: 1fr 26px 1fr;
    grid-template-rows: 1fr 26px 1fr;
    place-items: center;
    width: 58px;
    height: 58px;
    border: 7px solid #333;
    border-radius: 50%;
    color: #ddd;
}

.viewcube span:first-child,
.viewcube span:last-child {
    grid-column: 1 / 4;
}

.viewcube span:first-child {
    margin-top: -18px;
}

.viewcube span:last-child {
    margin-bottom: -18px;
}

.viewcube span:nth-child(2) {
    margin-left: -18px;
}

.viewcube span:nth-child(4) {
    margin-right: -18px;
}

.viewcube button {
    justify-content: center;
    width: 26px;
    height: 26px;
    background: #b2b2b2;
    font-size: 16px;
    color: #555;
}

.wcs {
    position: absolute;
    top: 97px;
    right: 26px;
    width: 30px;
    height: 11px;
    padding-left: 3px;
    border: 1px solid #77778a;
    border-radius: 3px;
    background: #a4a3b3;
    font-size: 7px;
    color: #666675;
}

.navbar {
    position: absolute;
    top: 124px;
    right: 2px;
    width: 21px;
    border-radius: 2px;
    background: #3d3d3f;
}

.navbar svg {
    width: 20px;
    height: 132px;
}

.vscroll {
    width: 11px;
    background: #f3f2f4;
    text-align: center;
    font-size: 5px;
}

.vscroll span {
    display: block;
    height: 12px;
}

.vscroll i {
    display: block;
    height: 10px;
    margin: 116px 1px 0;
    border: 1px solid #888;
    background: #ddd;
}

.layout-tabs {
    display: flex;
    flex: none;
    height: 10px;
    line-height: 10px;
    background: #f0eef1;
}

.layout-tabs button {
    justify-content: center;
    width: 9px;
    border-right: 1px solid #bbb;
    font-size: 6px;
}

.layout-tabs .model {
    width: 26px;
    margin-left: 2px;
    border: 0;
    background: #000;
    font-size: 8px;
    font-weight: bold;
    color: #fff;
    clip-path: polygon(0 0, 100% 0, 85% 100%, 15% 100%);
}

.layout-tabs .sheet {
    width: 30px;
    border: 0;
    font-size: 8px;
}

.hscroll {
    width: 326px;
    margin-left: auto;
    padding-left: 5px;
    border-left: 1px solid #999;
}

.toolbar {
    flex: none;
    height: 23px;
    padding: 4px 0 0 5px;
    background: #68676a;
}

.strip {
    display: flex;
    align-items: center;
    justify-content: space-between;
    width: 493px;
    height: 14px;
    padding: 0 1px;
    background: #f1f0f3;
}

.rule {
    width: 1px;
    height: 12px;
    background: #999;
}

.command {
    display: flex;
    flex: none;
    height: 32px;
    border-bottom: 1px solid #444;
}

.command-grip {
    display: flex;
    flex-direction: column;
    justify-content: flex-end;
    gap: 2px;
    align-items: center;
    width: 14px;
    background: #68676a;
    color: #fff;
}

.command-body {
    flex: 1;
    background: #fff;
    font-family: "Liberation Mono", "Noto Sans CJK SC", monospace;
}

.command-body p {
    height: 19px;
    padding: 6px 0 0 1px;
    background: #c9c7cb;
    color: #111;
}

.command-body label {
    display: flex;
    align-items: center;
    gap: 2px;
    padding-left: 2px;
}

.command-body input {
    flex: 1;
    padding-left: 2px;
    font-style: italic;
}

.command-body .arrow {
    border-top-color: #888;
}

::placeholder {
    color: #888;
}

.status {
    display: flex;
    flex: none;
    align-items: center;
    height: 15px;
    border-top: 1px solid #555;
    background: linear-gradient(#9b9a9d, #7c7b7e);
    font-family: "Noto Sans CJK SC", sans-serif;
    color: #111;
}

.ratio {
    gap: 4px;
    width: 50px;
    height: 14px;
    padding-left: 3px;
    background: #b4b3b6;
}

.coords {
    width: 76px;
    padding-left: 7px;
    font-family: "Liberation Sans", sans-serif;
}

.modes {
    display: flex;
    width: 207px;
}

.modes button {
    flex: 1;
    justify-content: center;
    height: 14px;
    border-right: 1px solid #777;
    background: #aaa9ac;
}

.modes .on {
    background: #b5dcea;
}

.spaces {
    display: flex;
    gap: 1px;
    margin-left: auto;
    padding-right: 200px;
}

.spaces button {
    justify-content: center;
    min-width: 14px;
    height: 13px;
    border: 1px solid #777;
    background: #b5b4b7;
}

/* floating properties palette */

.palette {
    position: absolute;
    top: 32px;
    left: 0;
    display: flex;
    width: 154px;
    height: 282px;
    border: 1px solid #8d8b90;
    background: #f0eff2;
}

.palette-bar {
    display: flex;
    flex-direction: column;
    gap: 2px;
    align-items: center;
    width: 13px;
    background: #c8c6cb;
    color: #111;
}

.palette-bar button {
    height: 10px;
}

.palette-bar svg {
    width: 9px;
    height: 9px;
}

.palette-bar span {
    margin: auto 0 6px;
    transform: rotate(180deg);
    writing-mode: vertical-rl;
    text-orientation: sideways;
}

.palette-body {
    display: flex;
    flex: 1;
    flex-direction: column;
    min-width: 0;
    padding: 9px 9px 2px 3px;
    border-left: 1px solid #aaa8ad;
}

.palette-head {
    display: flex;
    gap: 2px;
    margin: 0 0 4px 11px;
}

.palette-head .drop {
    flex: 1;
    border-color: #999;
    background: #eee;
}

.palette-scroll {
    display: flex;
    flex: 1;
    gap: 4px;
    min-height: 0;
}

.track {
    width: 6px;
    background: #e2e0e4;
}

.track i {
    display: block;
    height: 78%;
    background: #b5b3b8;
}

.sections {
    flex: 1;
    min-width: 0;
    overflow: hidden;
}

.section {
    justify-content: space-between;
    width: 100%;
    height: 13px;
    margin-top: 2px;
    padding: 0 7px 0 3px;
    background: linear-gradient(#b4b2b7, #929095);
    font-weight: bold;
    color: #222;
}

.section:first-child {
    margin-top: 0;
}

.section i {
    border: 2px solid transparent;
    border-top: 0;
    border-bottom: 3px solid #111;
}

.sections table {
    width: 105px;
    margin-left: auto;
    border-collapse: collapse;
    table-layout: fixed;
}

.sections th,
.sections td {
    height: 13px;
    padding-left: 2px;
    border: 1px solid #b5b3b8;
    font-weight: normal;
    text-align: left;
    white-space: nowrap;
    overflow: hidden;
}

.sections th {
    width: 46px;
}

.sections td {
    padding-left: 1px;
    background: #fff;
}

.sections .locked {
    background: #f0eff2;
}

.sections td i {
    display: inline-block;
    margin: 0 4px 0 1px;
    vertical-align: middle;
}

.sections .swatch {
    width: 7px;
    height: 7px;
}

.sections .line {
    width: 22px;
}

/* watermarks */

.baidu {
    position: absolute;
    right: 126px;
    bottom: 20px;
    width: 106px;
    color: #fff;
    opacity: .75;
}

.baidu svg {
    width: 30px;
    height: 16px;
    margin-left: 73px;
    fill: #fff;
}

.baidu b,
.baidu span {
    display: block;
    font: bold 42px/46px "Liberation Sans", sans-serif;
}

.baidu span {
    font: 24px/26px "Liberation Sans", sans-serif;
}

.brand {
    position: absolute;
    right: 0;
    bottom: 0;
    display: flex;
    align-items: center;
    gap: 8px;
    width: 200px;
    height: 95px;
    padding-left: 12px;
    background: #21305a;
    color: #ddd;
    white-space: nowrap;
}

.brand svg {
    width: 44px;
    height: 58px;
}

.brand b,
.brand span {
    display: block;
    font: 500 29px/36px Inter, "Noto Sans CJK SC", sans-serif;
}

.brand span {
    font: 24px/24px Inter, sans-serif;
}
```
